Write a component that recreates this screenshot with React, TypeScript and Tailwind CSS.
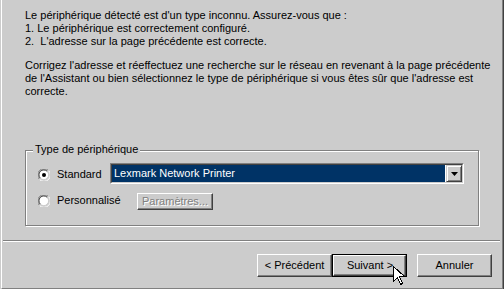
import React from "react";

function Radio({ checked }: { checked: boolean }) {
  return (
    <svg width="12" height="12" viewBox="0 0 12 12" className="block">
      <path d="M1.5 10.5 A6 6 0 0 1 10.5 1.5" fill="none" stroke="#808080" strokeWidth="1" />
      <path d="M10.5 1.5 A6 6 0 0 1 1.5 10.5" fill="none" stroke="#ffffff" strokeWidth="1" />
      <circle cx="6" cy="6" r="4.5" fill="#ffffff" />
      <path d="M2.3 9.2 A4.6 4.6 0 0 1 9.2 2.3" fill="none" stroke="#404040" strokeWidth="1" />
      <path d="M9.2 2.3 A4.6 4.6 0 0 1 2.3 9.2" fill="none" stroke="#cccccc" strokeWidth="1" />
      {checked && <circle cx="6" cy="6" r="2" fill="#000000" />}
    </svg>
  );
}

function Btn({ label, isDefault }: { label: string; isDefault?: boolean }) {
  if (isDefault) {
    return (
      <div className="w-[75px] h-[23px] border border-black box-border">
        <div className="w-full h-full border border-t-white border-l-white border-r-[#404040] border-b-[#404040] shadow-[inset_-1px_-1px_0_#808080] flex items-center justify-center box-border">
          <span className="leading-[13px] pl-[1px]">{label}</span>
        </div>
      </div>
    );
  }
  return (
    <div className="w-[75px] h-[23px] border border-t-white border-l-white border-r-[#404040] border-b-[#404040] shadow-[inset_-1px_-1px_0_#808080] flex items-center justify-center box-border">
      <span className="leading-[13px]">{label}</span>
    </div>
  );
}

export default function App() {
  return (
    <div className="relative w-[504px] h-[289px] bg-[#cccccc] overflow-hidden font-['Liberation_Sans',Arial,sans-serif] text-[11px] text-black pl-px border-r border-r-[#404040] box-border">
      <div className="h-full flex flex-col border-l border-l-white border-r border-r-[#808080] border-b border-b-[#808080] box-border">
        <div className="pl-[23px] pt-[9px] leading-[13px]">
          <p>
            Le périphérique détecté est d'un type inconnu. Assurez-vous que :
            <br />
            1. Le périphérique est correctement configuré.
            <br />
            2.&nbsp; L'adresse sur la page précédente est correcte.
          </p>
          <p className="mt-[11px]">
            Corrigez l'adresse et réeffectuez une recherche sur le réseau en revenant à la page précédente
            <br />
            de l'Assistant ou bien sélectionnez le type de périphérique si vous êtes sûr que l'adresse est
            <br />
            correcte.
          </p>
        </div>

        <div className="relative ml-[23px] mt-[52px] w-[454px] h-[76px] border border-[#808080] shadow-[inset_1px_1px_0_#ffffff,1px_1px_0_#ffffff] box-border">
          <div className="absolute left-[7px] top-[-8px] bg-[#cccccc] px-[2px] leading-[13px]">
            Type de périphérique
          </div>
          <div className="pt-[12px]">
            <div className="flex items-start h-[21px]">
              <div className="ml-[12px] mt-[6px]">
                <Radio checked />
              </div>
              <div className="ml-[7px] mt-[5px] w-[53px] leading-[13px]">Standard</div>
              <div className="w-[354px] h-[21px] border border-t-[#808080] border-l-[#808080] border-b-white border-r-white box-border">
                <div className="w-full h-full border border-t-[#404040] border-l-[#404040] border-b-[#cccccc] border-r-[#cccccc] bg-white flex box-border">
                  <div className="flex-1 bg-[#003366] text-white leading-[13px] flex items-center pl-[2px] mr-px">
                    Lexmark Network Printer
                  </div>
                  <div className="w-[16px] h-full border border-t-[#cccccc] border-l-[#cccccc] border-r-[#404040] border-b-[#404040] shadow-[inset_1px_1px_0_#ffffff,inset_-1px_-1px_0_#808080] bg-[#cccccc] flex items-center justify-center box-border">
                    <svg width="7" height="4" viewBox="0 0 7 4" className="block">
                      <path d="M0 0 H7 L3.5 4 Z" fill="#000" />
                    </svg>
                  </div>
                </div>
              </div>
            </div>
            <div className="flex items-start mt-[9px]">
              <div className="ml-[12px] mt-[2px]">
                <Radio checked={false} />
              </div>
              <div className="ml-[7px] mt-[1px] w-[80px] leading-[13px]">Personnalisé</div>
              <div className="w-[76px] h-[17px] border border-t-white border-l-white border-r-[#404040] border-b-[#404040] shadow-[inset_-1px_-1px_0_#808080] flex items-center justify-center box-border">
                <span className="leading-[13px] text-[#808080] [text-shadow:1px_1px_0_#ffffff]">Paramètres...</span>
              </div>
            </div>
          </div>
        </div>

        <div className="ml-px mr-[2px] mt-[14px] h-[2px] border-t border-t-[#808080] border-b border-b-white box-border" />

        <div className="flex justify-end mt-[12px] mr-[10px]">
          <Btn label="< Précédent" />
          <Btn label="Suivant >" isDefault />
          <div className="ml-[10px]">
            <Btn label="Annuler" />
          </div>
        </div>
      </div>

      <svg width="13" height="20" viewBox="0 0 13 20" className="absolute left-[393px] top-[266px] block">
        <path
          d="M0.5 0.5 L0.5 15.5 L4.5 11.5 L7.5 18.5 L9.5 17.5 L6.5 10.5 L11.5 10.5 Z"
          fill="#ffffff"
          stroke="#000000"
          strokeWidth="1"
          shapeRendering="crispEdges"
        />
      </svg>
    </div>
  );
}
